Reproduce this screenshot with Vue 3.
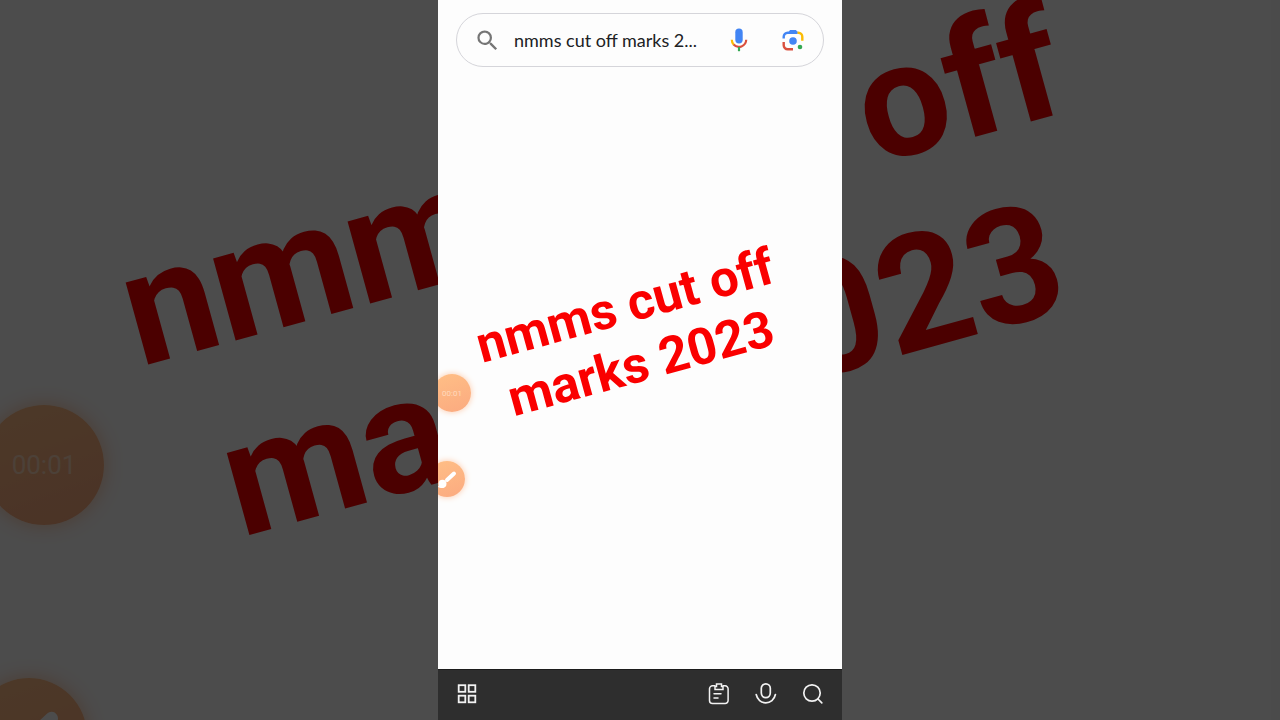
<script setup>
import { ref } from 'vue'

const query = ref('nmms cut off marks 2...')
</script>

<template>
  <main class="stage">
    <div class="backdrop" aria-hidden="true">
      <p class="headline headline-large">nmms cut off<br />marks 2023</p>
      <span class="bubble timer timer-large">00:01</span>
      <span class="bubble brush brush-large">
        <svg viewBox="0 0 36 36">
          <path d="M18 19 25 12.500" stroke="#fff" stroke-width="4" stroke-linecap="round" />
          <circle cx="13.500" cy="22.800" r="4" fill="#fff" />
          <path d="M8.500 25.500c1.500 0 2-2 2-3.500l5 4.500c-2.500 1-5.500.8-7-1z" fill="#fff" />
        </svg>
      </span>
      <div class="shade"></div>
    </div>

    <section class="phone">
      <form class="search" role="search" @submit.prevent>
        <button class="icon-button" type="submit" aria-label="Search">
          <svg class="glass" viewBox="0 0 24 24">
            <path
              fill="#757575"
              d="M15.500 14h-.79l-.28-.27A6.470 6.470 0 0 0 16 9.500 6.500 6.500 0 1 0 9.500 16c1.610 0 3.090-.59 4.230-1.570l.27.28v.79l5 4.990L20.490 19l-4.990-5zm-6 0C7.010 14 5 11.990 5 9.500S7.010 5 9.500 5 14 7.010 14 9.500 11.990 14 9.500 14z"
            />
          </svg>
        </button>
        <input v-model="query" class="query" type="text" aria-label="Search query" />
        <button class="icon-button" type="button" aria-label="Search by voice">
          <svg class="tool" viewBox="0 0 24 24" fill="none">
            <rect x="8.300" y="0.500" width="7.400" height="15" rx="3.700" fill="#4285f4" />
            <path d="M4.800 11.800a7.200 7.200 0 0 0 2 5" stroke="#fbbc04" stroke-width="2.200" />
            <path d="M6.600 16.600a7.300 7.300 0 0 0 12.600-4.800" stroke="#d9503f" stroke-width="2.200" />
            <path d="M12 19v4.200" stroke="#34a853" stroke-width="2.200" />
          </svg>
        </button>
        <button class="icon-button lens" type="button" aria-label="Search by image">
          <svg class="tool" viewBox="0 0 24 24" fill="none">
            <path d="M2.700 10.500V8.800a4 4 0 0 1 4-4h10" stroke="#4285f4" stroke-width="2.400" />
            <path d="M7 5 9 2h6l2 3z" fill="#4285f4" />
            <path d="M16.500 4.800h.8a4 4 0 0 1 4 4v4" stroke="#fbbc04" stroke-width="2.400" />
            <path d="M2.700 14v3.200a4 4 0 0 0 4 4H12" stroke="#d9503f" stroke-width="2.400" />
            <circle cx="12" cy="13" r="3.800" fill="#4285f4" />
            <circle cx="19" cy="19" r="2.300" fill="#34a853" />
          </svg>
        </button>
      </form>

      <div class="canvas">
        <h1 class="headline">nmms cut off<br />marks 2023</h1>
        <button class="bubble timer" type="button">00:01</button>
        <button class="bubble brush" type="button" aria-label="Brush">
          <svg viewBox="0 0 36 36">
            <path d="M18 19 25 12.500" stroke="#fff" stroke-width="4" stroke-linecap="round" />
            <circle cx="13.500" cy="22.800" r="4" fill="#fff" />
            <path d="M8.500 25.500c1.500 0 2-2 2-3.500l5 4.500c-2.500 1-5.500.8-7-1z" fill="#fff" />
          </svg>
        </button>
      </div>

      <nav class="bar" aria-label="Tools">
        <button class="icon-button apps" type="button" aria-label="Apps">
          <svg class="tool" viewBox="0 0 24 24" fill="none" stroke="#f2f2f2" stroke-width="1.800">
            <rect x="3.700" y="3.200" width="6.600" height="6.600" />
            <rect x="13.700" y="3.200" width="6.600" height="6.600" />
            <rect x="3.700" y="13.700" width="6.600" height="6.600" />
            <rect x="13.700" y="13.700" width="6.600" height="6.600" />
          </svg>
        </button>
        <button class="icon-button" type="button" aria-label="Clipboard">
          <svg class="tool" viewBox="0 0 24 24" fill="none" stroke="#f2f2f2" stroke-width="1.500" stroke-linecap="round">
            <path d="M8 3.800H5.500a3 3 0 0 0-3 3v11.700a3 3 0 0 0 3 3h12.600a3 3 0 0 0 3-3V6.800a3 3 0 0 0-3-3H16" />
            <path d="M8 7.500h8V4.500h-1.500V2h-5v2.500H8z" />
            <path d="M7 11.800h7M7 16h4" />
          </svg>
        </button>
        <button class="icon-button" type="button" aria-label="Voice input">
          <svg class="tool" viewBox="0 0 24 24" fill="none" stroke="#f2f2f2" stroke-width="1.700" stroke-linecap="round">
            <rect x="7.300" y="1.800" width="9" height="13.800" rx="4.500" />
            <path d="M2.200 12.500c1 5 5 8.300 9.600 8.300s8.600-3.300 9.600-8.300" />
          </svg>
        </button>
        <button class="icon-button" type="button" aria-label="Find">
          <svg class="tool" viewBox="0 0 24 24" fill="none" stroke="#f2f2f2" stroke-width="1.700" stroke-linecap="round">
            <circle cx="11" cy="11" r="8.200" />
            <path d="m17 17 3.800 3.800" />
          </svg>
        </button>
      </nav>
    </section>
  </main>
</template>

<style>
body {
  margin: 0;
}
</style>

<style scoped>
.stage {
  position: relative;
  display: flex;
  justify-content: center;
  min-height: 100vh;
  overflow: hidden;
  background: #4c4c4c;
  font-family: Roboto, "Liberation Sans", sans-serif;
}

.backdrop {
  position: absolute;
  inset: 0;
  overflow: hidden;
  background: #fdfdfd;
}

.shade {
  position: absolute;
  inset: 0;
  background: rgba(0, 0, 0, 0.7);
}

.phone {
  position: relative;
  display: flex;
  flex-direction: column;
  aspect-ratio: 101 / 180;
  height: 100vh;
  overflow: hidden;
  background: #fdfdfd;
}

.search {
  box-sizing: border-box;
  display: flex;
  align-items: center;
  height: 54px;
  margin: 13px 18px 0;
  padding: 0 18px 0 17px;
  border: 1px solid #d5d5da;
  border-radius: 27px;
}

.icon-button {
  display: block;
  flex: none;
  padding: 0;
  border: 0;
  background: none;
}

.icon-button svg {
  display: block;
}

.glass {
  width: 27px;
  height: 27px;
}

.tool {
  width: 24px;
  height: 24px;
}

.query {
  flex: 1;
  min-width: 0;
  margin: 0 12px 0 13px;
  padding: 0;
  border: 0;
  outline: 0;
  background: none;
  color: #202124;
  font: 18px/24px Lato, "Open Sans", sans-serif;
}

.lens {
  margin-left: 30px;
}

.canvas {
  flex: 1;
}

.headline {
  position: absolute;
  top: calc(50% - 25px);
  left: calc(50% - 7px);
  margin: 0;
  color: #fa0000;
  font-size: 51px;
  font-weight: 700;
  line-height: 60px;
  text-align: center;
  white-space: nowrap;
  transform: translate(-50%, -50%) rotate(-15.4deg);
}

.headline-large {
  top: calc(50% - 82px);
  left: calc(50% - 23px);
  font-size: 161px;
  line-height: 191px;
}

.bubble {
  position: absolute;
  display: flex;
  align-items: center;
  justify-content: center;
  padding: 0;
  border: 0;
  border-radius: 50%;
  background: linear-gradient(160deg, #ffbf86, #fbaa80);
  box-shadow: 0 0 6px #fdc9a8;
  color: #ffd9bd;
  font-family: Roboto, sans-serif;
}

.timer {
  top: calc(50% + 14px);
  left: -5px;
  width: 38px;
  height: 38px;
  font-size: 8px;
}

.brush {
  top: calc(50% + 101px);
  left: -9px;
  width: 36px;
  height: 36px;
}

.brush svg {
  width: 100%;
  height: 100%;
}

.timer-large {
  top: calc(50% + 45px);
  left: -16px;
  width: 120px;
  height: 120px;
  box-shadow: 0 0 18px #fdc9a8;
  font-size: 26px;
}

.brush-large {
  top: calc(50% + 318px);
  left: -29px;
  width: 116px;
  height: 116px;
  box-shadow: 0 0 18px #fdc9a8;
}

.bar {
  box-sizing: border-box;
  display: flex;
  align-items: center;
  gap: 23px;
  height: 51px;
  padding: 0 17px 2px;
  border-top: 1px solid #1c1c1c;
  background: #2e2e2e;
}

.apps {
  margin-right: auto;
}
</style>
